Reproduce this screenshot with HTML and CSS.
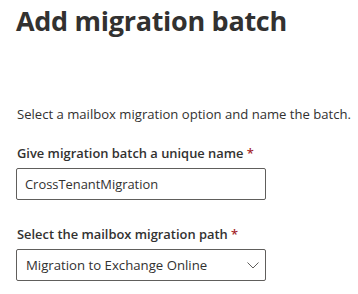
FILE: index.html
```html
<!DOCTYPE html>
<html lang="en">

<head>
    <meta charset="UTF-8">
    <meta name="viewport" content="width=device-width, initial-scale=1.0">
    <title>Add migration batch</title>
    <link rel="stylesheet" href="styles.css">
</head>

<body>
    <div class="panel">
        <h1 class="title">Add migration batch</h1>

        <p class="desc">Select a mailbox migration option and name the batch.</p>

        <div class="field">
            <label class="field-label" for="batchName">Give migration batch a unique name <span class="req">*</span></label>
            <input type="text" id="batchName" class="text-input" value="CrossTenantMigration">
        </div>

        <div class="field">
            <label class="field-label">Select the mailbox migration path <span class="req">*</span></label>
            <div class="dropdown">
                <span class="dropdown-value">Migration to Exchange Online</span>
                <svg class="chevron" width="12" height="7" viewBox="0 0 12 7">
                    <path d="M0.5 0.5 L6 6 L11.5 0.5" fill="none" stroke="#605e5c" stroke-width="1"/>
                </svg>
            </div>
        </div>
    </div>
</body>

</html>
```

FILE: styles.css
```css
body {
    margin: 0;
    background-color: #ffffff;
    font-family: "Open Sans", "Noto Sans", sans-serif;
    color: #323130;
}

.panel {
    padding: 0 16px;
}

.title {
    margin: 0;
    padding-top: 3px;
    font-size: 27px;
    font-weight: 700;
    line-height: 36px;
    letter-spacing: -0.3px;
    color: #323130;
}

.desc {
    margin: 65px 0 0 1px;
    font-size: 13.1px;
    line-height: 20px;
    white-space: nowrap;
}

.field {
    margin-top: 14px;
}

.field + .field {
    margin-top: 19px;
}

.field-label {
    display: block;
    font-size: 12.9px;
    font-weight: 600;
    line-height: 20px;
    padding: 5px 0;
    margin-left: 1px;
}

.req {
    color: #a4262c;
}

.text-input,
.dropdown {
    box-sizing: border-box;
    width: 250px;
    height: 32px;
    border: 1px solid #605e5c;
    border-radius: 2px;
    font-family: inherit;
    color: #323130;
}

.text-input {
    display: block;
    padding: 0 8px;
    font-size: 12.9px;
    outline: none;
}

.dropdown {
    display: flex;
    align-items: center;
    justify-content: space-between;
    padding: 0 6px 0 9px;
    font-size: 13.2px;
}
```
